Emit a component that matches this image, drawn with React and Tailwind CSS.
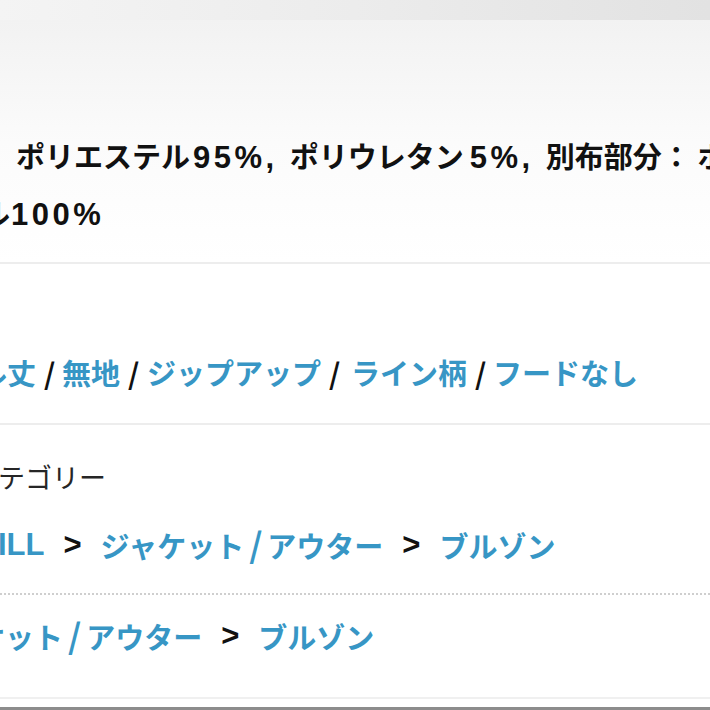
import React from 'react';

const tags = ['ル丈', '無地', 'ジップアップ', 'ライン柄', 'フードなし'];

// latin runs (digits, %, >) are set a bit larger than the kana, like the original
const Num = ({ children, className = '' }) => (
  <span className={`font-['Liberation_Sans',sans-serif] text-[31px] tracking-[3.5px] ${className}`}>
    {children}
  </span>
);

const Slash = () => (
  <span className="w-[10px] text-center text-[#111]">/</span>
);

const Chevron = () => (
  <span className="font-['Liberation_Sans',sans-serif] text-[31px] font-bold text-[#111]">&gt;</span>
);

const Path = ({ head, tail }) => (
  <span className="text-[#3796c5]">
    {head}
    <span className="mx-[5px] text-[34px] leading-none">/</span>
    {tail}
  </span>
);

const App = () => {
  return (
    <div className="w-[710px] h-[710px] overflow-hidden bg-white font-['Noto_Sans_CJK_JP',sans-serif]">
      {/* top strip */}
      <div className="h-[20px] bg-linear-to-r from-[#f4f4f4] via-[#ececec] to-[#e2e2e2]" />

      {/* material */}
      <section className="h-[244px] border-b-2 border-[#ededed] bg-linear-to-b from-[#f2f2f2] via-[#fbfbfb] to-white overflow-hidden">
        <div className="pt-[108px] text-[29px] font-bold leading-[54px] text-[#111] whitespace-nowrap">
          <p className="pl-[16px]">
            ポリエステル<Num className="ml-[3px]">95%, </Num>ポリウレタン
            <Num className="ml-[6px]">5%, </Num>別布部分： ポリエステル
          </p>
          <p className="ml-[-19px]">
            ル<Num className="ml-[1px]">100%</Num>
          </p>
        </div>
      </section>

      {/* tags */}
      <section className="h-[161px] border-b-2 border-[#ededed] overflow-hidden">
        <div className="pt-[81px] ml-[-22px] flex items-center gap-[8px] text-[29px] font-bold leading-[54px] whitespace-nowrap">
          {tags.map((tag, i) => (
            <React.Fragment key={tag}>
              {i > 0 && <Slash />}
              <span className={`text-[#3796c5] ${i === 2 ? 'ml-[1px]' : ''} ${i === 3 ? 'ml-[4px]' : ''}`}>{tag}</span>
            </React.Fragment>
          ))}
        </div>
      </section>

      {/* category */}
      <section className="overflow-hidden">
        <p className="pt-[34px] ml-[-2px] text-[27px] leading-[36px] text-[#262626] whitespace-nowrap">テゴリー</p>
        <div className="mt-[23px] h-[54px] ml-[-2px] flex items-center gap-[19px] text-[29px] font-bold leading-[54px] whitespace-nowrap">
          <span className="font-['Liberation_Sans',sans-serif] text-[31px] text-[#3796c5]">ILL</span>
          <Chevron />
          <Path head="ジャケット" tail="アウター" />
          <Chevron />
          <span className="text-[#3796c5]">ブルゾン</span>
        </div>
        <div className="mt-[21px] border-t-2 border-dotted border-[#cfcfcf]" />
        <div className="pt-[14px] h-[68px] ml-[-24px] flex items-center gap-[19px] text-[29px] font-bold leading-[54px] whitespace-nowrap">
          <Path head="ケット" tail="アウター" />
          <Chevron />
          <span className="text-[#3796c5]">ブルゾン</span>
        </div>
        <div className="mt-[34px] border-t-2 border-[#f0f0f0]" />
        <div className="mt-[8px] h-[4px] bg-[#8c8c8c]" />
      </section>
    </div>
  );
};

export default App;
